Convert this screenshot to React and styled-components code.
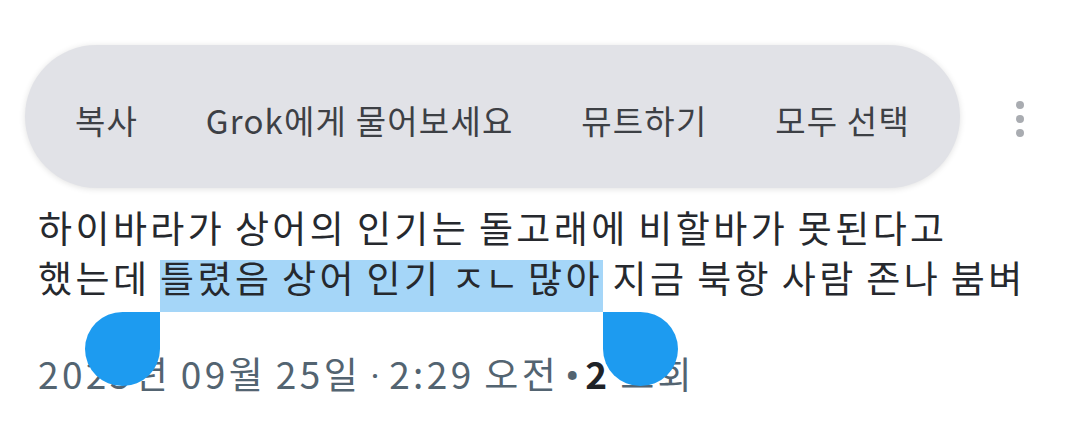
import React from "react";
import styled, { createGlobalStyle } from "styled-components";

const Global = createGlobalStyle`
  html, body { margin: 0; padding: 0; background: #ffffff; }
  body { font-family: "Noto Sans CJK KR", "Noto Sans", sans-serif; }
`;

const Page = styled.div`
  width: 1080px;
  height: 430px;
  overflow: hidden;
  display: flex;
  flex-direction: column;
  padding: 45px 0 0 25px;
  box-sizing: border-box;
`;

const TopRow = styled.div`
  display: flex;
  align-items: center;
`;

const Toolbar = styled.div`
  display: flex;
  align-items: center;
  justify-content: space-between;
  width: 935px;
  height: 143px;
  box-sizing: border-box;
  padding: 6px 50px 0 50px;
  background: #e1e2e7;
  border-radius: 72px;
  box-shadow: 0 1px 6px rgba(0, 0, 0, 0.12);
`;

const MenuItem = styled.span`
  font-family: "Noto Sans CJK KR", sans-serif;
  font-size: 33px;
  letter-spacing: 1.2px;
  color: #3d4045;
  white-space: nowrap;
`;

const More = styled.div`
  display: flex;
  flex-direction: column;
  gap: 6px;
  margin-left: 56px;
  margin-top: 4px;
`;

const Dot = styled.span`
  width: 8px;
  height: 8px;
  border-radius: 50%;
  background: #a9acb1;
`;

const Body = styled.div`
  padding-left: 13px;
  margin-top: 14px;
`;

const Text = styled.p`
  margin: 0;
  font-family: "Noto Sans CJK KR", sans-serif;
  font-size: 37px;
  line-height: 50px;
  letter-spacing: 3.4px;
  word-spacing: -2px;
  color: #26292e;
  white-space: nowrap;
`;

const Selected = styled.span`
  position: relative;
  padding-bottom: 8px;
  background: linear-gradient(to bottom, transparent 10px, #a5d6f8 10px);
`;

const Jamo = styled.span`
  letter-spacing: -0.5px;
`;

const Handle = styled.span`
  position: absolute;
  top: 100%;
  width: 75px;
  height: 74px;
  background: #1d9bf0;
  border-radius: ${(p) => (p.$side === "left" ? "50% 0 50% 50%" : "0 50% 50% 50%")};
  ${(p) => (p.$side === "left" ? "right: 100%;" : "left: 100%;")}
  z-index: 2;
`;

const Meta = styled.div`
  margin-top: 46px;
  font-family: "Noto Sans CJK KR", sans-serif;
  font-size: 37px;
  line-height: 50px;
  letter-spacing: 3.4px;
  word-spacing: -2px;
  color: #536471;
  white-space: nowrap;
`;

const Sep = styled.span`
  display: inline-block;
  width: ${(p) => (p.$bold ? 26 : 28)}px;
  text-align: center;
  font-family: "Roboto", "Noto Sans", sans-serif;
  font-weight: ${(p) => (p.$bold ? 700 : 400)};
  letter-spacing: 0;
`;

const Strong = styled.b`
  color: #1f2328;
  font-weight: 700;
`;

export default function App() {
  return (
    <>
      <Global />
      <Page>
        <TopRow>
          <Toolbar>
            <MenuItem>복사</MenuItem>
            <MenuItem>Grok에게 물어보세요</MenuItem>
            <MenuItem>뮤트하기</MenuItem>
            <MenuItem>모두 선택</MenuItem>
          </Toolbar>
          <More>
            <Dot />
            <Dot />
            <Dot />
          </More>
        </TopRow>
        <Body>
          <Text>
            하이바라가 상어의 인기는 돌고래에 비할바가 못된다고
            <br />
            했는데{" "}
            <Selected>
              <Handle $side="left" />
              틀렸음 상어 인기 <Jamo>ㅈㄴ</Jamo> 많아
              <Handle $side="right" />
            </Selected>{" "}
            지금 북항 사람 존나 붐벼
          </Text>
          <Meta>
            2025년 09월 25일<Sep>·</Sep>2:29 오전<Sep $bold>•</Sep>
            <Strong>2</Strong> 조회
          </Meta>
        </Body>
      </Page>
    </>
  );
}
